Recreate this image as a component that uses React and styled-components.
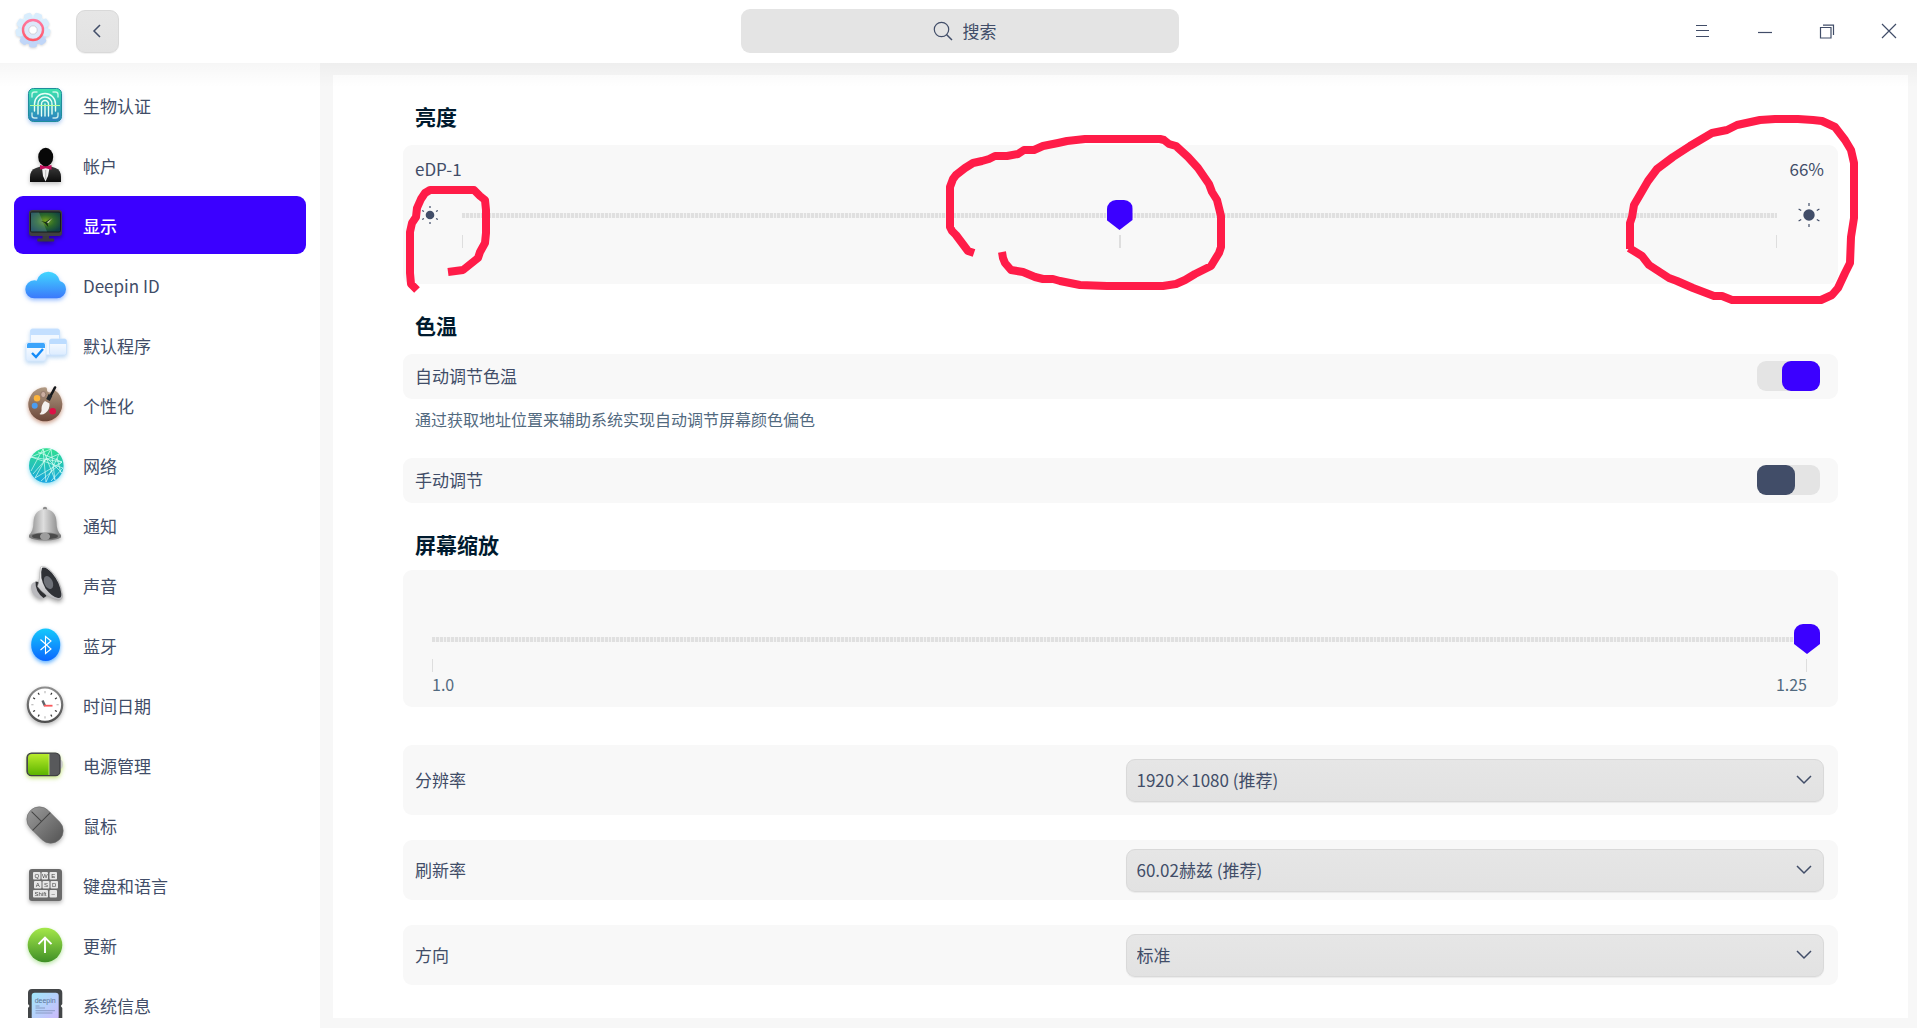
import { useState } from "react";
import styled, { createGlobalStyle } from "styled-components";

const ACCENT = "#3b00ff";
const TEXT = "#414d68";

const range = (n) => Array.from({ length: n }, (_, i) => i);

const Gradient = ({ id, from, to }) => (
  <linearGradient id={id} x1="0" y1="0" x2="0" y2="1">
    <stop offset="0" stopColor={from} />
    <stop offset="1" stopColor={to} />
  </linearGradient>
);

const BiometricIcon = () => (
  <Icon $shadow="rgba(44, 120, 220, 0.4)">
    <Gradient id="bio" from="#3ee6ae" to="#2a7fc0" />
    <rect x="7.5" y="7.5" width="33" height="33" rx="5" fill="url(#bio)" stroke="#1f8d9b" />
    <g fill="none" stroke="#e9fff6" strokeWidth="1.4" strokeLinecap="round">
      <path d="M11 16v-2.500q0-2.500 2.500-2.500H16M32 11h2.500q2.500 0 2.500 2.500V16M11 32v2.500q0 2.500 2.500 2.500H16M32 37h2.500q2.500 0 2.500-2.500V32" opacity=".8" />
      <path d="M13.500 30V23a10.500 10.500 0 0 1 21 0v7M17 33V23a7 7 0 0 1 14 0v10M20.500 35V23a3.500 3.500 0 0 1 7 0v12M24 35V23" />
    </g>
    <path d="M9 24.500h30" stroke="#b6ff9c" strokeWidth="1" />
  </Icon>
);

const AccountIcon = () => (
  <Icon $shadow="rgba(0, 0, 0, 0.25)">
    <Gradient id="suit" from="#3b3b3b" to="#0c0c0c" />
    <path d="M9 41v-5q0-7 6-9l6-2h7.500l6 2q5.500 2 5.500 9v5z" fill="url(#suit)" />
    <path d="M21 27h7.500l-1.500 8-2.500 5.500-2.500-5.500z" fill="#f1f1f1" />
    <path d="M24.700 29v9" stroke="#999" strokeWidth=".6" />
    <ellipse cx="24.700" cy="16" rx="7.500" ry="9.300" fill="#080808" />
    <path d="M19 24l5.700 1.500 5.800-1.500v4.800l-5.800-1.600L19 28.800z" fill="#c4105c" />
  </Icon>
);

const DisplayIcon = () => (
  <Icon $shadow="rgba(0, 0, 0, 0.4)">
    <radialGradient id="screen" cx=".5" cy=".45" r=".6">
      <stop offset="0" stopColor="#74a11c" />
      <stop offset=".5" stopColor="#2d6a2a" />
      <stop offset="1" stopColor="#0f3f45" />
    </radialGradient>
    <rect x="8" y="9" width="33" height="26" rx="3" fill="#3f4042" />
    <rect x="9.500" y="11" width="30" height="20" rx="1.500" fill="url(#screen)" stroke="#17181a" />
    <path d="M10 11.500h8l8 19H10z" fill="#7fa7c9" opacity=".28" />
    <path d="M20 20l4.500 1 6.500-4-4.500 5 .8 4-3.500-4z" fill="#132b18" />
    <path d="M25.500 21.500l6-4.500-4 5z" fill="#c0d0a0" />
    <path d="M21.500 35h6.500v2.500h4.500q.8 0 .8 1.500t-.8 1.500H17q-.8 0-.8-1.500t.8-1.500h4.500z" fill="#3a3b3e" />
  </Icon>
);

const CloudIcon = () => (
  <Icon $shadow="rgba(40, 120, 255, 0.5)">
    <Gradient id="cloud" from="#41d8ff" to="#3b78fb" />
    <path
      d="M13.300 37.300a9 9 0 0 1 0-18q1.500 0 2.500.4a11.800 11.800 0 0 1 23 .2q6.200 2 6.200 8.400a9.200 9.200 0 0 1-9.200 9z"
      fill="url(#cloud)"
    />
  </Icon>
);

const DefaultAppsIcon = () => (
  <Icon $shadow="rgba(60, 140, 220, 0.35)">
    <Gradient id="sheet" from="#ffffff" to="#dcecff" />
    <rect x="9.500" y="8" width="29" height="26" rx="2" fill="#f2f8ff" stroke="#c9e2ff" />
    <path d="M9.500 14v-4q0-2 2-2h25q2 0 2 2v4z" fill="#c3dfff" />
    <rect x="28.500" y="18" width="17" height="16" rx="2" fill="url(#sheet)" stroke="#cfe4fb" />
    <path d="M28.500 23v-3q0-2 2-2h13q2 0 2 2v3z" fill="#bcdcff" />
    <rect x="5" y="21.500" width="20" height="18.500" rx="2" fill="url(#sheet)" stroke="#d6e8fb" />
    <path d="M6 27v-3.500q0-1.500 1.500-1.500h15q1.500 0 1.500 1.500V27z" fill="#3ba4fb" />
    <path d="M11 32l4 4 7-8" fill="none" stroke="#138bf8" strokeWidth="2.400" />
  </Icon>
);

const PersonalIcon = () => (
  <Icon $shadow="rgba(150, 60, 20, 0.5)">
    <Gradient id="palette" from="#b09a83" to="#6c4739" />
    <path
      d="M24 6.300q2 0 2 1.700-.5 4 3.500 3.500 2.500-.5 4-2.500a17 17 0 1 1-9.500-2.700z"
      fill="url(#palette)"
    />
    <ellipse cx="22.300" cy="13.500" rx="2.500" ry="3" fill="#cbaea0" stroke="#80655a" strokeWidth=".6" />
    <circle cx="16" cy="17.300" r="3.200" fill="#fcb33a" />
    <circle cx="13.700" cy="24.700" r="3" fill="#4b9df0" />
    <circle cx="31.700" cy="30.300" r="3.300" fill="#dd1145" />
    <path d="M34 6.500l-4.500 8.500" stroke="#15181b" strokeWidth="2.600" strokeLinecap="round" />
    <path d="M29.500 14l-2.500 5" stroke="#24282c" strokeWidth="4" />
    <path d="M24 20l4.500 2.500q.5 6-4 9.500-3.500 2.500-6 1 2.500-2 2-5.500.2-4.500 3.500-7.500z" fill="#f3f1ef" />
  </Icon>
);

const NetworkIcon = () => (
  <Icon $shadow="rgba(30, 190, 230, 0.5)">
    <Gradient id="net" from="#2fe08f" to="#18a5e0" />
    <circle cx="25.300" cy="24.500" r="17.300" fill="url(#net)" />
    <path
      d="M22 8l3 33M22 8l12 31M22 8L10 30M30 8L14 37M30 8l4 31M30 8L10 16M10 16l31 5M10 16l12 4M17 11l24 10M38 13L22 20M38 13L25 41M41 21L14 37M41 21L20 40M42 27l-20-7M42 27L30 40M26 17l15 15M26 17L12 33M36 17l4 15"
      stroke="#dcfff4"
      strokeWidth=".8"
      fill="none"
      opacity=".85"
    />
  </Icon>
);

const BellIcon = () => (
  <Icon $shadow="rgba(0, 0, 0, 0.35)">
    <linearGradient id="bell" x1="0" y1="0" x2="1" y2="0">
      <stop offset="0" stopColor="#8a8a8a" />
      <stop offset=".45" stopColor="#dedede" />
      <stop offset="1" stopColor="#7e7e7e" />
    </linearGradient>
    <circle cx="24" cy="8" r="2.200" fill="#8c8c8c" />
    <path d="M24 8q11 1 11.500 13 0 9 4.500 13v2.500H8V34q4.500-4 4.500-13Q13 9 24 8z" fill="url(#bell)" />
    <ellipse cx="24" cy="35.500" rx="16" ry="4" fill="#7c7c7c" />
    <ellipse cx="24" cy="35.200" rx="13" ry="3" fill="#4b4b4b" />
    <ellipse cx="24" cy="35.500" rx="5" ry="3.800" fill="#9d9d9d" />
  </Icon>
);

const SoundIcon = () => (
  <Icon $shadow="rgba(0, 0, 0, 0.35)">
    <Gradient id="horn" from="#ffffff" to="#b4b4b8" />
    <path d="M14 21q-4.500 1-4 6 1 8 9.500 11l5-2-7-14z" fill="#b9b9bd" />
    <path d="M14.500 20.500q-.5 10 8 16.500l3-2-8-14z" fill="#2e2f32" />
    <path
      d="M19.500 6Q22 4 28 8q11 9 13.500 26 .3 5.500-4.500 5-13-3-20.500-13.500 2.500-7 3-19.500z"
      fill="url(#horn)"
      stroke="#a5a5a5"
      strokeWidth=".5"
    />
    <path d="M21 6.800Q25 5 31 12q8 9.500 9.300 20.500.5 5-3.300 4.500-6-1-12.500-9.500Q18 16 21 6.800z" fill="#2f3136" />
    <ellipse cx="27.500" cy="21.500" rx="4.200" ry="6.800" transform="rotate(-24 27.500 21.500)" fill="#6d7077" />
  </Icon>
);

const BluetoothIcon = () => (
  <Icon $shadow="rgba(20, 140, 255, 0.7)">
    <Gradient id="bt" from="#15c9fb" to="#0a66ff" />
    <ellipse cx="24.700" cy="23.700" rx="14.500" ry="16.300" fill="url(#bt)" />
    <path d="M19.500 18.500L30 28l-5.500 4.500V15.500L30 20l-10.500 9" fill="none" stroke="#fff" strokeWidth="1.100" />
  </Icon>
);

const ClockIcon = () => (
  <Icon $shadow="rgba(0, 0, 0, 0.3)">
    <Gradient id="rim" from="#8d8d8d" to="#4e4e4e" />
    <circle cx="24" cy="23.700" r="17.200" fill="#fff" stroke="url(#rim)" strokeWidth="2.200" />
    {range(12).map((i) => (
      <path
        key={i}
        d="M24 10v2.200"
        stroke={i % 3 ? "#333" : "#bbb"}
        strokeWidth="1.200"
        transform={`rotate(${i * 30} 24 23.700)`}
      />
    ))}
    <path d="M24 25l-2.500-5.500" stroke="#5d6468" strokeWidth="2.400" />
    <path d="M23 24.700h8.500" stroke="#f9595c" strokeWidth="1.800" />
  </Icon>
);

const BatteryIcon = () => (
  <Icon $shadow="rgba(140, 200, 0, 0.5)">
    <Gradient id="charge" from="#b8ec2a" to="#5cb400" />
    <ellipse cx="39.500" cy="23.300" rx="2.300" ry="4.500" fill="#c9c9c9" />
    <rect x="6" y="12.200" width="33" height="22.500" rx="4.500" fill="#58595b" stroke="#3f4042" strokeWidth="1.300" />
    <path d="M28 13v21H11q-4-.2-4-4V17q0-4 4-4z" fill="url(#charge)" />
    <path d="M28 13v21" stroke="#c9f27a" strokeWidth=".8" />
  </Icon>
);

const MouseIcon = () => (
  <Icon $shadow="rgba(0, 0, 0, 0.3)">
    <Gradient id="mouse" from="#959595" to="#5a5a5a" />
    <g transform="rotate(-45 24 24)">
      <rect x="11.500" y="3.500" width="25" height="41" rx="12.500" fill="url(#mouse)" stroke="#6a6a6a" strokeWidth=".6" />
      <path d="M11.500 19h25M24 5v14" stroke="#444" strokeWidth="1" fill="none" />
    </g>
  </Icon>
);

const KEY_ROWS = [
  { y: 11, keys: [["Q", 12, 7.5], ["W", 20.5, 6.5], ["E", 28.5, 7.5]] },
  { y: 20, keys: [["A", 13, 7.5], ["S", 21.5, 7], ["D", 29.5, 7.5]] },
  { y: 29, keys: [["Shift", 12, 15], ["–", 28.5, 7.5]] },
];

const KeyboardIcon = () => (
  <Icon $shadow="rgba(0, 0, 0, 0.3)">
    <rect x="8" y="8" width="33" height="32" rx="3" fill="#6b6b6b" />
    {KEY_ROWS.map((row) =>
      row.keys.map(([label, x, width]) => (
        <g key={label}>
          <rect x={x} y={row.y} width={width} height="7.500" rx="1" fill="#e6e6e6" />
          <KeyLabel x={x + width / 2} y={row.y + 6}>
            {label}
          </KeyLabel>
        </g>
      ))
    )}
  </Icon>
);

const UpdateIcon = () => (
  <Icon $shadow="rgba(80, 190, 30, 0.4)">
    <Gradient id="update" from="#a5e84a" to="#3f8f26" />
    <circle cx="24" cy="24" r="17.300" fill="url(#update)" />
    <path d="M24 32V17M17.500 23.200L24 16.700l6.500 6.500" fill="none" stroke="#fff" strokeWidth="1.900" />
  </Icon>
);

const SystemIcon = () => (
  <Icon>
    <linearGradient id="chip" x1="0" y1="0" x2="1" y2="1">
      <stop offset="0" stopColor="#a0e8fb" />
      <stop offset="1" stopColor="#cdb8fb" />
    </linearGradient>
    <path d="M11 8h26.500q3.800 0 3.800 4v11l-1.500 2 1.500 2v18H7V27l1.500-2L7 23V12q0-4 4-4z" fill="#434648" />
    <rect x="10.700" y="11.700" width="27" height="27" rx="3" fill="url(#chip)" />
    <ChipLabel x="24.200" y="21.500">
      deepin
    </ChipLabel>
    <path d="M14.500 25h4M14.500 27h9.500M14.500 29.700h19.500M14.500 32h17" stroke="#7f8fb8" strokeWidth=".8" />
  </Icon>
);

const SettingsLogo = () => (
  <Logo viewBox="0 0 36 36" aria-hidden="true">
    <Gradient id="gear" from="#e2f6ff" to="#bcd2f6" />
    <Gradient id="ring" from="#ff78a0" to="#ff5a68" />
    <circle cx="18" cy="17" r="15" fill="url(#gear)" />
    {range(9).map((i) => (
      <rect
        key={i}
        x="14"
        y="-.5"
        width="8"
        height="7"
        rx="2.500"
        fill={i > 2 && i < 6 ? "#c0d6f8" : "#d9edfd"}
        transform={`rotate(${i * 40 + 20} 18 17)`}
      />
    ))}
    <circle cx="18" cy="17" r="10" fill="#dde8fa" stroke="url(#ring)" strokeWidth="2.400" />
    <circle cx="18" cy="17" r="4.200" fill="#fff" stroke="#c5c9d2" strokeWidth=".8" />
  </Logo>
);

const Sun = ({ radius, ray, size }) => (
  <svg width="30" height="26" viewBox="-15 -13 30 26" aria-hidden="true">
    <circle r={radius} fill={TEXT} />
    {range(6).map((i) => (
      <path
        key={i}
        d={`M0 ${-ray}V${-size}`}
        stroke={TEXT}
        strokeWidth="1.200"
        transform={`rotate(${i * 60})`}
      />
    ))}
  </svg>
);

const NAV_ITEMS = [
  { label: "生物认证", icon: BiometricIcon },
  { label: "帐户", icon: AccountIcon },
  { label: "显示", icon: DisplayIcon },
  { label: "Deepin ID", icon: CloudIcon },
  { label: "默认程序", icon: DefaultAppsIcon },
  { label: "个性化", icon: PersonalIcon },
  { label: "网络", icon: NetworkIcon },
  { label: "通知", icon: BellIcon },
  { label: "声音", icon: SoundIcon },
  { label: "蓝牙", icon: BluetoothIcon },
  { label: "时间日期", icon: ClockIcon },
  { label: "电源管理", icon: BatteryIcon },
  { label: "鼠标", icon: MouseIcon },
  { label: "键盘和语言", icon: KeyboardIcon },
  { label: "更新", icon: UpdateIcon },
  { label: "系统信息", icon: SystemIcon },
];

const SELECTS = [
  { id: "resolution", label: "分辨率", options: ["1920×1080 (推荐)"], tall: true },
  { id: "refresh", label: "刷新率", options: ["60.02赫兹 (推荐)"] },
  { id: "rotation", label: "方向", options: ["标准"] },
];

const MARKS = [
  "417,290 411,284 410,273 410,232 412,223 416,217 417,208 421,199 425,193 430,190 474,190 480,196 485,200 486,210 486,233 485,243 480,252 478,258 463,270 448,272",
  "974,253 968,251 962,243 956,235 952,231 950,227 950,187 953,179 956,175 965,168 973,163 982,161 989,159 995,156 1007,156 1018,154 1024,150 1034,150 1043,146 1058,143 1067,141 1085,139 1160,139 1164,140 1169,144 1176,146 1188,157 1198,168 1209,184 1212,192 1217,200 1219,208 1221,216 1221,247 1219,253 1211,266 1195,274 1185,280 1176,284 1163,286 1107,286 1080,285 1060,281 1053,279 1043,279 1035,277 1023,272 1011,270 1005,263 1003,258 1002,252",
  "1630,249 1630,223 1632,217 1634,205 1641,193 1648,181 1657,169 1673,157 1690,146 1712,133 1727,130 1737,125 1760,120 1775,119 1798,119 1813,120 1822,121 1835,127 1845,140 1851,150 1854,163 1854,218 1851,237 1850,263 1845,273 1838,288 1832,295 1821,300 1732,300 1722,296 1714,296 1693,288 1677,281 1669,278 1649,265 1642,256 1629,248",
];

const TitleBar = () => (
  <Header>
    <HeaderLeft>
      <SettingsLogo />
      <BackButton type="button" aria-label="返回">
        <svg width="10" height="14" viewBox="0 0 10 14">
          <path d="M8 1L2 7l6 6" fill="none" stroke={TEXT} strokeWidth="1.500" />
        </svg>
      </BackButton>
    </HeaderLeft>
    <SearchBox>
      <svg width="20" height="20" viewBox="0 0 20 20" aria-hidden="true">
        <circle cx="8.500" cy="8.500" r="7.200" fill="none" stroke={TEXT} strokeWidth="1.200" />
        <path d="M13.500 13.500l5.500 5.500" stroke={TEXT} strokeWidth="1.500" />
      </svg>
      <SearchInput type="text" placeholder="搜索" aria-label="搜索" />
    </SearchBox>
    <WindowControls>
      <WindowButton type="button" aria-label="菜单">
        <svg width="16" height="16" viewBox="0 0 16 16">
          <path d="M1 2.500h11M1 7.500h13M1 13.500h13" stroke={TEXT} strokeWidth="1.200" />
        </svg>
      </WindowButton>
      <WindowButton type="button" aria-label="最小化">
        <svg width="16" height="16" viewBox="0 0 16 16">
          <path d="M1 9.500h14" stroke={TEXT} strokeWidth="1.200" />
        </svg>
      </WindowButton>
      <WindowButton type="button" aria-label="还原">
        <svg width="16" height="16" viewBox="0 0 16 16" fill="none" stroke={TEXT} strokeWidth="1.200">
          <path d="M1.500 4.500h10.500v10.500H1.500zM4 2.200h10.500V12" />
        </svg>
      </WindowButton>
      <WindowButton type="button" aria-label="关闭">
        <svg width="16" height="16" viewBox="0 0 16 16">
          <path d="M1 1l14 14M15 1L1 15" stroke={TEXT} strokeWidth="1.200" />
        </svg>
      </WindowButton>
    </WindowControls>
  </Header>
);

const ToggleRow = ({ label, defaultChecked }) => (
  <SwitchCard>
    <span>{label}</span>
    <Switch type="checkbox" role="switch" defaultChecked={defaultChecked} />
  </SwitchCard>
);

const SelectRow = ({ id, label, options, tall }) => (
  <SelectCard $tall={tall}>
    <label htmlFor={id}>{label}</label>
    <SelectBox>
      <Select id={id}>
        {options.map((option) => (
          <option key={option}>{option}</option>
        ))}
      </Select>
      <svg width="16" height="10" viewBox="0 0 16 10" aria-hidden="true">
        <path d="M1 1l7 7 7-7" fill="none" stroke={TEXT} strokeWidth="1.500" />
      </svg>
    </SelectBox>
  </SelectCard>
);

const App = () => {
  const [current, setCurrent] = useState("显示");

  return (
    <Page>
      <GlobalStyle />
      <TitleBar />
      <Body>
        <Sidebar>
          <NavList>
            {NAV_ITEMS.map(({ label, icon: NavIcon }) => (
              <NavItem
                key={label}
                href="#"
                $active={label === current}
                onClick={() => setCurrent(label)}
              >
                <NavIcon />
                <NavLabel>{label}</NavLabel>
              </NavItem>
            ))}
          </NavList>
        </Sidebar>

        <Content>
          <Heading>亮度</Heading>
          <BrightnessCard>
            <BrightnessTitle>
              <label htmlFor="brightness">eDP-1</label>
              <span>66%</span>
            </BrightnessTitle>
            <BrightnessRow>
              <Sun radius={4.3} ray={7} size={9} />
              <Slider id="brightness" type="range" defaultValue="50" />
              <Sun radius={5.7} ray={9} size={12} />
            </BrightnessRow>
            <Ticks $inset="47px">
              <Tick />
              <Tick $wide />
              <Tick />
            </Ticks>
          </BrightnessCard>

          <Heading>色温</Heading>
          <ToggleRow label="自动调节色温" defaultChecked />
          <Tip>通过获取地址位置来辅助系统实现自动调节屏幕颜色偏色</Tip>
          <ToggleRow label="手动调节" />

          <Heading $tight>屏幕缩放</Heading>
          <ScaleCard>
            <Slider
              type="range"
              min="1"
              max="1.25"
              step="0.25"
              defaultValue="1.25"
              aria-label="屏幕缩放"
            />
            <Ticks $inset="13px">
              <Tick />
              <Tick />
            </Ticks>
            <ScaleLabels>
              <span>1.0</span>
              <span>1.25</span>
            </ScaleLabels>
          </ScaleCard>

          <SelectList>
            {SELECTS.map((row) => (
              <SelectRow key={row.id} {...row} />
            ))}
          </SelectList>
        </Content>
      </Body>

      <Marks viewBox="0 0 1917 1028" preserveAspectRatio="xMinYMin meet" aria-hidden="true">
        {MARKS.map((points) => (
          <polyline key={points} points={points} />
        ))}
      </Marks>
    </Page>
  );
};

export default App;

const GlobalStyle = createGlobalStyle`
  * {
    box-sizing: border-box;
  }

  body {
    margin: 0;
    color: ${TEXT};
    font-family: "Noto Sans CJK SC", sans-serif;
    font-size: 17px;
    line-height: 26px;
  }

  button,
  input,
  select {
    color: inherit;
    font: inherit;
  }
`;

const Page = styled.div`
  position: relative;
  display: flex;
  flex-direction: column;
  height: 100vh;
  background: #f7f7f7;
`;

const Header = styled.header`
  position: relative;
  display: grid;
  grid-template-columns: 1fr 438px 1fr;
  align-items: center;
  flex: none;
  height: 63px;
  padding: 0 0 1px 2px;
  background: #fff;

  /* soft shadow the title bar casts on the body */
  &::after {
    content: "";
    position: absolute;
    top: 100%;
    left: 0;
    right: 0;
    height: 24px;
    background: linear-gradient(rgba(0, 0, 0, 0.035), rgba(0, 0, 0, 0));
    pointer-events: none;
    z-index: 1;
  }
`;

const HeaderLeft = styled.div`
  display: flex;
  align-items: center;
  gap: 25px;
  padding-left: 13px;
`;

const Logo = styled.svg`
  width: 36px;
  height: 36px;
  overflow: visible;
  filter: drop-shadow(0 1px 1px rgba(0, 0, 0, 0.15));
`;

const BackButton = styled.button`
  display: flex;
  align-items: center;
  justify-content: center;
  width: 43px;
  height: 43px;
  padding: 0 2px 0 0;
  border: 1px solid #d9d9d9;
  border-radius: 9px;
  background: linear-gradient(#e6e6e6, #e2e2e2);
  box-shadow: 0 1px 1px rgba(0, 0, 0, 0.06);
`;

const SearchBox = styled.label`
  display: flex;
  align-items: center;
  justify-content: center;
  gap: 10px;
  height: 44px;
  padding-left: 12px;
  border-radius: 9px;
  background: #e4e4e4;
`;

const SearchInput = styled.input`
  width: 36px;
  padding: 0;
  border: 0;
  outline: 0;
  background: none;

  &::placeholder {
    color: ${TEXT};
    opacity: 1;
  }

  &:focus {
    width: 200px;
  }
`;

const WindowControls = styled.div`
  display: flex;
  justify-content: flex-end;
  gap: 6px;
`;

const WindowButton = styled.button`
  display: flex;
  align-items: center;
  justify-content: center;
  width: 56px;
  height: 62px;
  padding: 0;
  border: 0;
  background: none;
`;

const Body = styled.div`
  display: flex;
  flex: 1;
  gap: 13px;
  min-height: 0;
`;

const Sidebar = styled.nav`
  display: flex;
  flex: none;
  width: 320px;
  padding-bottom: 10px;
  background: #fff;
`;

const NavList = styled.div`
  display: flex;
  flex: 1;
  flex-direction: column;
  gap: 2px;
  padding: 13px 14px 0;
  overflow-y: auto;
  scrollbar-width: none;
`;

const NavItem = styled.a`
  display: flex;
  align-items: center;
  flex: none;
  gap: 14px;
  height: 58px;
  padding-left: 7px;
  border-radius: 9px;
  background: ${(p) => (p.$active ? ACCENT : "none")};
  color: ${(p) => (p.$active ? "#fff" : TEXT)};
  font-weight: ${(p) => (p.$active ? 500 : 400)};
  text-decoration: none;
`;

const NavLabel = styled.span`
  padding-top: 2px;
`;

const Icon = styled.svg.attrs({ viewBox: "0 0 48 48", "aria-hidden": true })`
  width: 48px;
  height: 48px;
  filter: ${(p) => (p.$shadow ? `drop-shadow(0 2px 2px ${p.$shadow})` : "none")};
`;

const KeyLabel = styled.text`
  fill: #444;
  font-family: "Liberation Sans", sans-serif;
  font-size: 6px;
  text-anchor: middle;
`;

const ChipLabel = styled.text`
  fill: #5b7396;
  font-family: "Liberation Sans", sans-serif;
  font-size: 7px;
  text-anchor: middle;
`;

const Content = styled.main`
  flex: 1;
  min-width: 0;
  margin: 12px 9px 10px 0;
  padding: 0 70px;
  overflow-y: auto;
  scrollbar-width: none;
  background: #fff;
`;

const Heading = styled.h2`
  margin: 26px 12px ${(p) => (p.$tight ? "11px" : "14px")};
  color: #001a2e;
  font-size: 21px;
  font-weight: 700;
  line-height: 30px;
`;

const Card = styled.div`
  border-radius: 9px;
  background: #f8f8f8;
`;

const BrightnessCard = styled(Card)`
  padding: 11px 14px 36px 12px;
`;

const BrightnessTitle = styled.div`
  display: flex;
  justify-content: space-between;
  margin-bottom: 18px;
`;

const BrightnessRow = styled.div`
  display: flex;
  align-items: center;
  gap: 4px;
`;

const Slider = styled.input`
  display: block;
  flex: 1;
  width: 100%;
  min-width: 0;
  height: 30px;
  margin: 0;
  appearance: none;
  background: repeating-linear-gradient(
      90deg,
      #e0e0e0 0 3px,
      #f3f3f3 3px 4px,
      #e0e0e0 4px 7px,
      #f3f3f3 7px 8px,
      #e0e0e0 8px 11px,
      #f3f3f3 11px 12px,
      #e0e0e0 12px 14px,
      #f3f3f3 14px 15px
    )
    center / calc(100% - 26px) 5px no-repeat;

  &::-webkit-slider-thumb {
    width: 26px;
    height: 30px;
    appearance: none;
    border-radius: 9px 9px 0 0;
    background: ${ACCENT};
    clip-path: polygon(0 0, 100% 0, 100% 20px, 50% 100%, 0 20px);
  }
`;

const Ticks = styled.div`
  display: flex;
  justify-content: space-between;
  margin-top: 5px;
  padding: 0 ${(p) => p.$inset};
`;

const Tick = styled.i`
  width: ${(p) => (p.$wide ? "2px" : "1px")};
  height: 13px;
  background: #dedede;
`;

const SwitchCard = styled(Card).attrs({ as: "label" })`
  display: flex;
  align-items: center;
  justify-content: space-between;
  height: 45px;
  padding: 0 18px 1px 12px;
`;

const Switch = styled.input`
  display: flex;
  width: 63px;
  height: 30px;
  margin: 0;
  appearance: none;
  border-radius: 9px;
  background: #e4e4e4;

  &::before {
    content: "";
    width: 38px;
    border-radius: 9px;
    background: ${TEXT};
  }

  &:checked {
    justify-content: flex-end;
  }

  &:checked::before {
    background: ${ACCENT};
  }
`;

const Tip = styled.p`
  margin: 8px 12px 27px;
  color: #526a7f;
  font-size: 16px;
  line-height: 24px;
`;

const ScaleCard = styled(Card)`
  padding: 54px 18px 11px 16px;
`;

const ScaleLabels = styled.div`
  display: flex;
  justify-content: space-between;
  padding: 0 13px;
  color: #526a7f;
  font-size: 16px;
  line-height: 24px;
`;

const SelectList = styled.div`
  display: flex;
  flex-direction: column;
  gap: 25px;
  margin: 38px 0 33px;
`;

const SelectCard = styled(Card)`
  display: grid;
  grid-template-columns: 1fr 1fr;
  align-items: center;
  gap: 12px;
  height: ${(p) => (p.$tall ? "70px" : "60px")};
  padding: 0 14px 0 12px;
`;

const SelectBox = styled.div`
  display: grid;
  align-items: center;

  > * {
    grid-area: 1 / 1;
  }

  > svg {
    justify-self: end;
    margin-right: 12px;
    pointer-events: none;
  }
`;

const Select = styled.select`
  width: 100%;
  height: 43px;
  padding: 0 36px 0 10px;
  appearance: none;
  border: 1px solid #d9d9d9;
  border-radius: 9px;
  background: linear-gradient(#e6e6e6, #e2e2e2);
  box-shadow: 0 1px 1px rgba(0, 0, 0, 0.06);
`;

const Marks = styled.svg`
  position: absolute;
  top: 0;
  left: 0;
  width: 100%;
  z-index: 2;
  fill: none;
  stroke: #ff1c48;
  stroke-width: 8px;
  stroke-linejoin: round;
  pointer-events: none;
`;
